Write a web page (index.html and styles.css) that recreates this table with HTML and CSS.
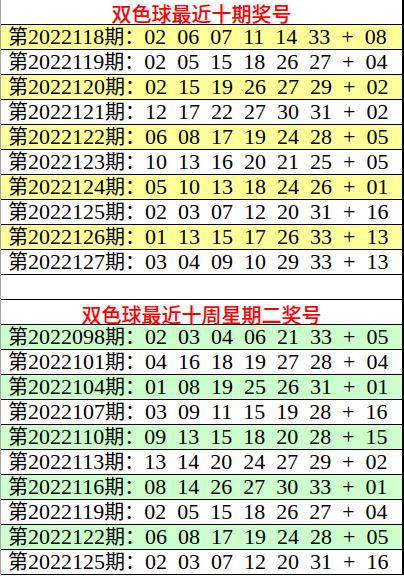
FILE: index.html
```html
<!DOCTYPE html>
<html lang="zh">
<head>
<meta charset="utf-8">
<link rel="stylesheet" href="styles.css">
</head>
<body>
<div class="sheet">
  <div class="title">双色球最近十期奖号</div>
  <div class="row yellow"><span class="c">第</span>2022118<span class="c">期：</span>02  06  07  11  14  33  +  08</div>
  <div class="row"><span class="c">第</span>2022119<span class="c">期：</span>02  05  15  18  26  27  +  04</div>
  <div class="row yellow"><span class="c">第</span>2022120<span class="c">期：</span>02  15  19  26  27  29  +  02</div>
  <div class="row"><span class="c">第</span>2022121<span class="c">期：</span>12  17  22  27  30  31  +  02</div>
  <div class="row yellow"><span class="c">第</span>2022122<span class="c">期：</span>06  08  17  19  24  28  +  05</div>
  <div class="row"><span class="c">第</span>2022123<span class="c">期：</span>10  13  16  20  21  25  +  05</div>
  <div class="row yellow"><span class="c">第</span>2022124<span class="c">期：</span>05  10  13  18  24  26  +  01</div>
  <div class="row"><span class="c">第</span>2022125<span class="c">期：</span>02  03  07  12  20  31  +  16</div>
  <div class="row yellow"><span class="c">第</span>2022126<span class="c">期：</span>01  13  15  17  26  33  +  13</div>
  <div class="row"><span class="c">第</span>2022127<span class="c">期：</span>03  04  09  10  29  33  +  13</div>
  <div class="row blank"></div>
  <div class="title second">双色球最近十周星期二奖号</div>
  <div class="row green"><span class="c">第</span>2022098<span class="c">期：</span>02  03  04  06  21  33  +  05</div>
  <div class="row"><span class="c">第</span>2022101<span class="c">期：</span>04  16  18  19  27  28  +  04</div>
  <div class="row green"><span class="c">第</span>2022104<span class="c">期：</span>01  08  19  25  26  31  +  01</div>
  <div class="row"><span class="c">第</span>2022107<span class="c">期：</span>03  09  11  15  19  28  +  16</div>
  <div class="row green"><span class="c">第</span>2022110<span class="c">期：</span>09  13  15  18  20  28  +  15</div>
  <div class="row"><span class="c">第</span>2022113<span class="c">期：</span>13  14  20  24  27  29  +  02</div>
  <div class="row green"><span class="c">第</span>2022116<span class="c">期：</span>08  14  26  27  30  33  +  01</div>
  <div class="row"><span class="c">第</span>2022119<span class="c">期：</span>02  05  15  18  26  27  +  04</div>
  <div class="row green"><span class="c">第</span>2022122<span class="c">期：</span>06  08  17  19  24  28  +  05</div>
  <div class="row"><span class="c">第</span>2022125<span class="c">期：</span>02  03  07  12  20  31  +  16</div>
</div>
</body>
</html>
```

FILE: styles.css
```css
html, body {
  margin: 0;
  padding: 0;
  background: #ffffff;
}

.sheet {
  width: 404px;
  box-sizing: border-box;
  border-left: 1px solid #a8a8a8;
  border-right: 2px solid #000000;
  display: flex;
  flex-direction: column;
}

.title {
  height: 22px;
  padding-top: 2px;
  border-bottom: 1px solid #000000;
  text-align: center;
  color: #ff0000;
  font-family: "Noto Sans CJK SC", sans-serif;
  font-weight: 500;
  font-size: 20px;
  line-height: 24px;
}

.title.second {
  padding-top: 3px;
  height: 21px;
}

.row {
  height: 23px;
  padding-top: 1px;
  border-bottom: 1px solid #000000;
  padding-left: 7px;
  font-family: "Liberation Serif", "Noto Sans CJK SC", serif;
  font-size: 22px;
  line-height: 22px;
  color: #000000;
  white-space: pre;
}

.row .c {
  font-family: "Noto Sans CJK SC", sans-serif;
  font-size: 20px;
  line-height: 20px;
}

.yellow {
  background: #ffff99;
}

.green {
  background: #ccffcc;
}

.blank {
  background: #ffffff;
}
```
